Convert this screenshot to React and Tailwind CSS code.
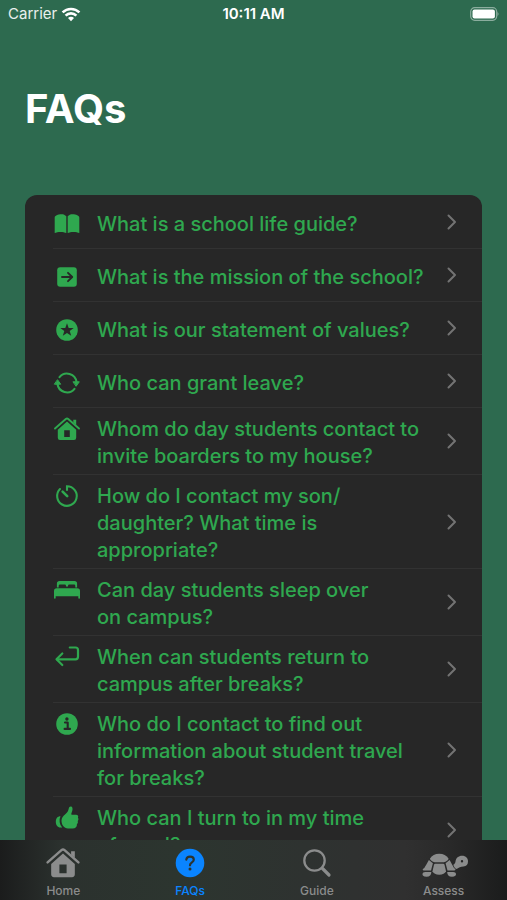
import React from "react";

const BookIcon = () => (
  <svg viewBox="0 0 28 28" className="h-7 w-7" fill="currentColor">
    <path d="M13.3 6.3C12 4.800 10.600 4.200 8.500 4.200C4.800 4.200 1.700 5.600 1.700 7.500V23C4.500 21.500 10.500 21.500 13.300 23Z" />
    <path d="M14.700 6.300C16 4.800 17.400 4.200 19.500 4.200C23.200 4.200 26.300 5.600 26.300 7.500V23C23.500 21.500 17.500 21.500 14.700 23Z" />
  </svg>
);

const ArrowSquareIcon = () => (
  <svg viewBox="0 0 28 28" className="h-7 w-7">
    <rect x="4.200" y="4.200" width="19.600" height="19.600" rx="3" fill="currentColor" />
    <path d="M9 14H19M15 9.800L19.200 14L15 18.200" fill="none" stroke="#272727" strokeWidth="1.900" strokeLinecap="round" strokeLinejoin="round" />
  </svg>
);

const StarIcon = () => (
  <svg viewBox="0 0 28 28" className="h-7 w-7">
    <circle cx="14" cy="14" r="10.800" fill="currentColor" />
    <path d="M14 7.200L15.700 12H20.700L16.700 15L18.200 19.800L14 16.900L9.800 19.800L11.300 15L7.300 12H12.300Z" fill="#272727" />
  </svg>
);

const CycleIcon = () => (
  <svg viewBox="0 0 28 28" className="h-7 w-7" fill="none" stroke="currentColor" strokeWidth="2.100" strokeLinecap="round">
    <path d="M6.500 8.200A9.600 9.600 0 0 1 23.500 13" />
    <path d="M21.500 19.800A9.600 9.600 0 0 1 4.500 15" />
    <path d="M20.300 12.800H26.300L23.300 17Z" fill="currentColor" strokeWidth="1" strokeLinejoin="round" />
    <path d="M1.700 15.200H7.700L4.700 11Z" fill="currentColor" strokeWidth="1" strokeLinejoin="round" />
  </svg>
);

const HouseIcon = ({ className = "h-7 w-7" }) => (
  <svg viewBox="0 0 28 28" className={className}>
    <path d="M2 13.500L12.800 4Q14 3 15.200 4L26 13.500" fill="none" stroke="currentColor" strokeWidth="1.900" strokeLinecap="round" strokeLinejoin="round" />
    <path d="M20.300 4.800H23.200V10.200L20.300 7.600Z" fill="currentColor" />
    <path
      fillRule="evenodd"
      d="M14 6.600L23.200 14.700V22.800Q23.200 25 21 25H7Q4.800 25 4.800 22.800V14.700ZM11.200 15.200V22H16.800V15.200Z"
      fill="currentColor"
    />
  </svg>
);

const TimerIcon = () => (
  <svg viewBox="0 0 28 28" className="h-7 w-7" fill="none" stroke="currentColor" strokeWidth="2.100" strokeLinecap="round">
    <path d="M14 8V4.200A9.800 9.800 0 1 1 7 7.100" />
    <path d="M9.600 9.600L14.200 14.200" strokeWidth="2.600" />
  </svg>
);

const BedIcon = () => (
  <svg viewBox="0 0 28 28" className="h-7 w-7" fill="currentColor">
    <path d="M3.900 11.500V7.600Q3.900 5 6.500 5H21.500Q24.100 5 24.100 7.600V11.500H22.300V9.800Q22.300 8.500 21 8.500H16.300Q15 8.500 15 9.800V10.500H13V9.800Q13 8.500 11.700 8.500H7Q5.700 8.500 5.700 9.800V11.500Z" />
    <path d="M3.800 12.200H24.200Q27 12.200 27 15V22Q27 22.800 26.200 22.800Q25.300 22.800 25.300 22V20.300H2.700V22Q2.700 22.800 1.800 22.800Q1 22.800 1 22V15Q1 12.200 3.800 12.200Z" />
  </svg>
);

const ReturnIcon = () => (
  <svg viewBox="0 0 28 28" className="h-7 w-7" fill="none" stroke="currentColor" strokeWidth="2.200" strokeLinecap="round" strokeLinejoin="round">
    <path d="M16.800 4.500H22.500Q25 4.500 25 7V13.800Q25 16.300 22.500 16.300H4" />
    <path d="M9.300 10.500L3.500 16.300L9.300 22" />
  </svg>
);

const InfoIcon = () => (
  <svg viewBox="0 0 28 28" className="h-7 w-7">
    <circle cx="14" cy="14" r="10.800" fill="currentColor" />
    <circle cx="13.900" cy="9" r="1.700" fill="#272727" />
    <path d="M12 12.500H14.700V18.700M11.600 18.900H17" fill="none" stroke="#272727" strokeWidth="2.100" strokeLinecap="round" strokeLinejoin="round" />
  </svg>
);

const ThumbIcon = () => (
  <svg viewBox="0 0 28 28" className="h-7 w-7" fill="currentColor">
    <path d="M8.500 16.500C8.500 14 10 12 12 10.500C14.500 8.500 15.200 7 15.700 4.800C16.100 2.900 17 2.300 18.100 2.600C20 3.200 20 6 18.300 9.800Q18 10.800 19 10.800H23C25 10.800 25.700 12.500 24.900 13.800C25.800 14.900 25.500 16.300 24.700 17C25.200 18.200 24.800 19.500 23.900 20.200C24.100 22.600 22.700 24.500 19.500 24.500H15C11 24.500 8.500 20.800 8.500 16.500Z" />
    <path d="M7.500 12.300C5.800 16 6.400 20.300 9.200 23.600H7.500C4.500 23.600 2.800 21 2.800 17.800C2.800 14.500 4.500 12.300 7.500 12.300Z" />
  </svg>
);

const ChevronIcon = () => (
  <svg viewBox="0 0 10 16" className="h-4 w-3 shrink-0 text-[#737373]" fill="none" stroke="currentColor" strokeWidth="2" strokeLinecap="round" strokeLinejoin="round">
    <path d="M1.500 1.500L8 8L1.500 14.500" />
  </svg>
);

const WifiIcon = () => (
  <svg viewBox="0 0 20 15" className="h-[15px] w-5" fill="none" stroke="currentColor" strokeWidth="2.600">
    <path d="M1.600 5.400A11.900 11.900 0 0 1 18.400 5.400" />
    <path d="M4.600 8.600A7.600 7.600 0 0 1 15.400 8.600" />
    <path d="M10 14.200L7 11A4.200 4.200 0 0 1 13 11Z" fill="currentColor" stroke="none" />
  </svg>
);

const BatteryIcon = () => (
  <svg viewBox="0 0 31 15" className="h-[15px] w-[31px]">
    <rect x="2.700" y="0.700" width="26" height="12.600" rx="4" fill="none" stroke="#fff" strokeOpacity="0.450" strokeWidth="1.200" />
    <rect x="4.500" y="2.500" width="22.400" height="9" rx="2" fill="#fff" />
    <path d="M29.600 5Q31.400 7 29.600 9Z" fill="#fff" fillOpacity="0.500" />
  </svg>
);

const QuestionIcon = () => (
  <svg viewBox="0 0 32 32" className="h-8 w-8">
    <circle cx="16" cy="16" r="14.300" fill="currentColor" />
    <path d="M12.300 12.600C12.600 10.500 14 9.700 16 9.700C18.300 9.700 19.800 11 19.800 12.800C19.800 15.600 16 15.300 16 18.300" fill="none" stroke="#2c332f" strokeWidth="2.200" strokeLinecap="round" />
    <circle cx="16" cy="21.900" r="1.500" fill="#2c332f" />
  </svg>
);

const SearchIcon = () => (
  <svg viewBox="0 0 32 32" className="h-8 w-8" fill="none" stroke="currentColor" strokeLinecap="round">
    <circle cx="13.500" cy="13.500" r="10.200" strokeWidth="2.300" />
    <path d="M21.500 21.500L28 28" strokeWidth="3.200" />
  </svg>
);

const TurtleIcon = () => (
  <svg viewBox="0 0 48 32" className="h-8 w-12" fill="currentColor">
    <path d="M10 11.500C12 8.200 15 6.700 19.200 6.700C23.500 6.700 26.500 8.200 28.500 11.500C28.600 13 26 14.800 23.800 15.200H14.700C12.500 14.800 9.900 13 10 11.500Z" />
    <path d="M15.200 16.700H23.300Q24.200 16.700 24.500 17.700L26 24.300Q24.500 27.700 19.200 27.700Q14 27.700 12.500 24.300L14 17.700Q14.300 16.700 15.200 16.700Z" />
    <path d="M8.900 13L12.900 16.200L11 23.600H4.600C2 23.600 2.300 22 4.300 21C6 18.500 7 16 8.900 13Z" />
    <path d="M29.600 13L25.600 16.200L27.500 23.600H33.500C36.100 23.600 36 22 34 21C32.500 18.500 31.500 16 29.600 13Z" />
    <path d="M5.200 25H11.300C11.300 28 9.800 29.700 6.500 29.700C3.300 29.700 2.300 28.300 2.500 26.700Q2.700 25 5.200 25Z" />
    <path d="M33.300 25H27.200C27.200 28 28.700 29.700 32 29.700C35.200 29.700 36.200 28.300 36 26.700Q35.800 25 33.300 25Z" />
    <path
      fillRule="evenodd"
      d="M35.500 14.500C36 11 38.500 8.800 42 8.800C46 8.800 48 11.400 48 14.500C48 17.500 46.500 19.300 43.500 19.600C40.500 20 39 20.500 36.700 22C35 21.500 33.700 19.500 33.300 17.700C34.500 17.300 35.200 16.300 35.500 14.500ZM42 13A1.200 1.200 0 1 0 42 15.400A1.200 1.200 0 1 0 42 13Z"
    />
  </svg>
);

const faqs = [
  { icon: BookIcon, question: "What is a school life guide?" },
  { icon: ArrowSquareIcon, question: "What is the mission of the school?" },
  { icon: StarIcon, question: "What is our statement of values?" },
  { icon: CycleIcon, question: "Who can grant leave?" },
  { icon: HouseIcon, question: "Whom do day students contact to\ninvite boarders to my house?" },
  { icon: TimerIcon, question: "How do I contact my son/\ndaughter? What time is\nappropriate?" },
  { icon: BedIcon, question: "Can day students sleep over\non campus?" },
  { icon: ReturnIcon, question: "When can students return to\ncampus after breaks?" },
  { icon: InfoIcon, question: "Who do I contact to find out\ninformation about student travel\nfor breaks?" },
  { icon: ThumbIcon, question: "Who can I turn to in my time\nof need?" },
];

const FaqRow = ({ icon: Icon, question }) => {
  return (
    <li className="pl-7">
      <button className="flex min-h-[53px] w-full items-center border-b border-[#323232] pr-6 text-left">
        <span className="flex flex-1 items-start gap-4 pt-2 pb-1">
          <span className="-mt-px h-[27px] shrink-0">
            <Icon />
          </span>
          <span className="whitespace-pre-line">{question}</span>
        </span>
        <ChevronIcon />
      </button>
    </li>
  );
};

const TabItem = ({ label, active, children }) => (
  <a
    href="#"
    aria-current={active ? "page" : undefined}
    className={
      active
        ? "flex flex-1 flex-col items-center gap-1 text-[#0a84ff]"
        : "flex flex-1 flex-col items-center gap-1 text-[#8b8c8c]"
    }
  >
    <span className="flex h-8 items-center">{children}</span>
    <span className="text-xs font-medium">{label}</span>
  </a>
);

const App = () => {
  return (
    <div className="flex h-screen flex-col overflow-hidden bg-[#2d6a4f] font-['Inter',sans-serif]">
      <header className="grid grid-cols-3 items-center px-2 pt-1 text-[15px] leading-5 text-white">
        <div className="flex items-center gap-1">
          <span className="text-white/90">Carrier</span>
          <WifiIcon />
        </div>
        <span className="text-center font-semibold">10:11 AM</span>
        <div className="flex justify-end">
          <BatteryIcon />
        </div>
      </header>

      <main className="min-h-0 flex-1 overflow-y-auto px-[25px] [scrollbar-width:none]">
        <h1 className="pt-[61px] text-[40px] leading-12 font-bold text-white">FAQs</h1>
        <ul className="mt-[62px] rounded-xl bg-[#272727] pt-px text-xl leading-[27px] font-medium text-[#2fa84f]">
          {faqs.map((faq) => (
            <FaqRow key={faq.question} icon={faq.icon} question={faq.question} />
          ))}
        </ul>
      </main>

      <nav className="flex h-15 shrink-0 bg-[linear-gradient(90deg,#1b1c1c_0%,#2b312e_12%,#2c352f_35%,#2e3230_60%,#303030_80%,#2a2a2a_88%,#1b1c1c_100%)] pt-[7px]">
        <TabItem label="Home">
          <HouseIcon className="h-9 w-9" />
        </TabItem>
        <TabItem label="FAQs" active>
          <QuestionIcon />
        </TabItem>
        <TabItem label="Guide">
          <SearchIcon />
        </TabItem>
        <TabItem label="Assess">
          <TurtleIcon />
        </TabItem>
      </nav>
    </div>
  );
};

export default App;
